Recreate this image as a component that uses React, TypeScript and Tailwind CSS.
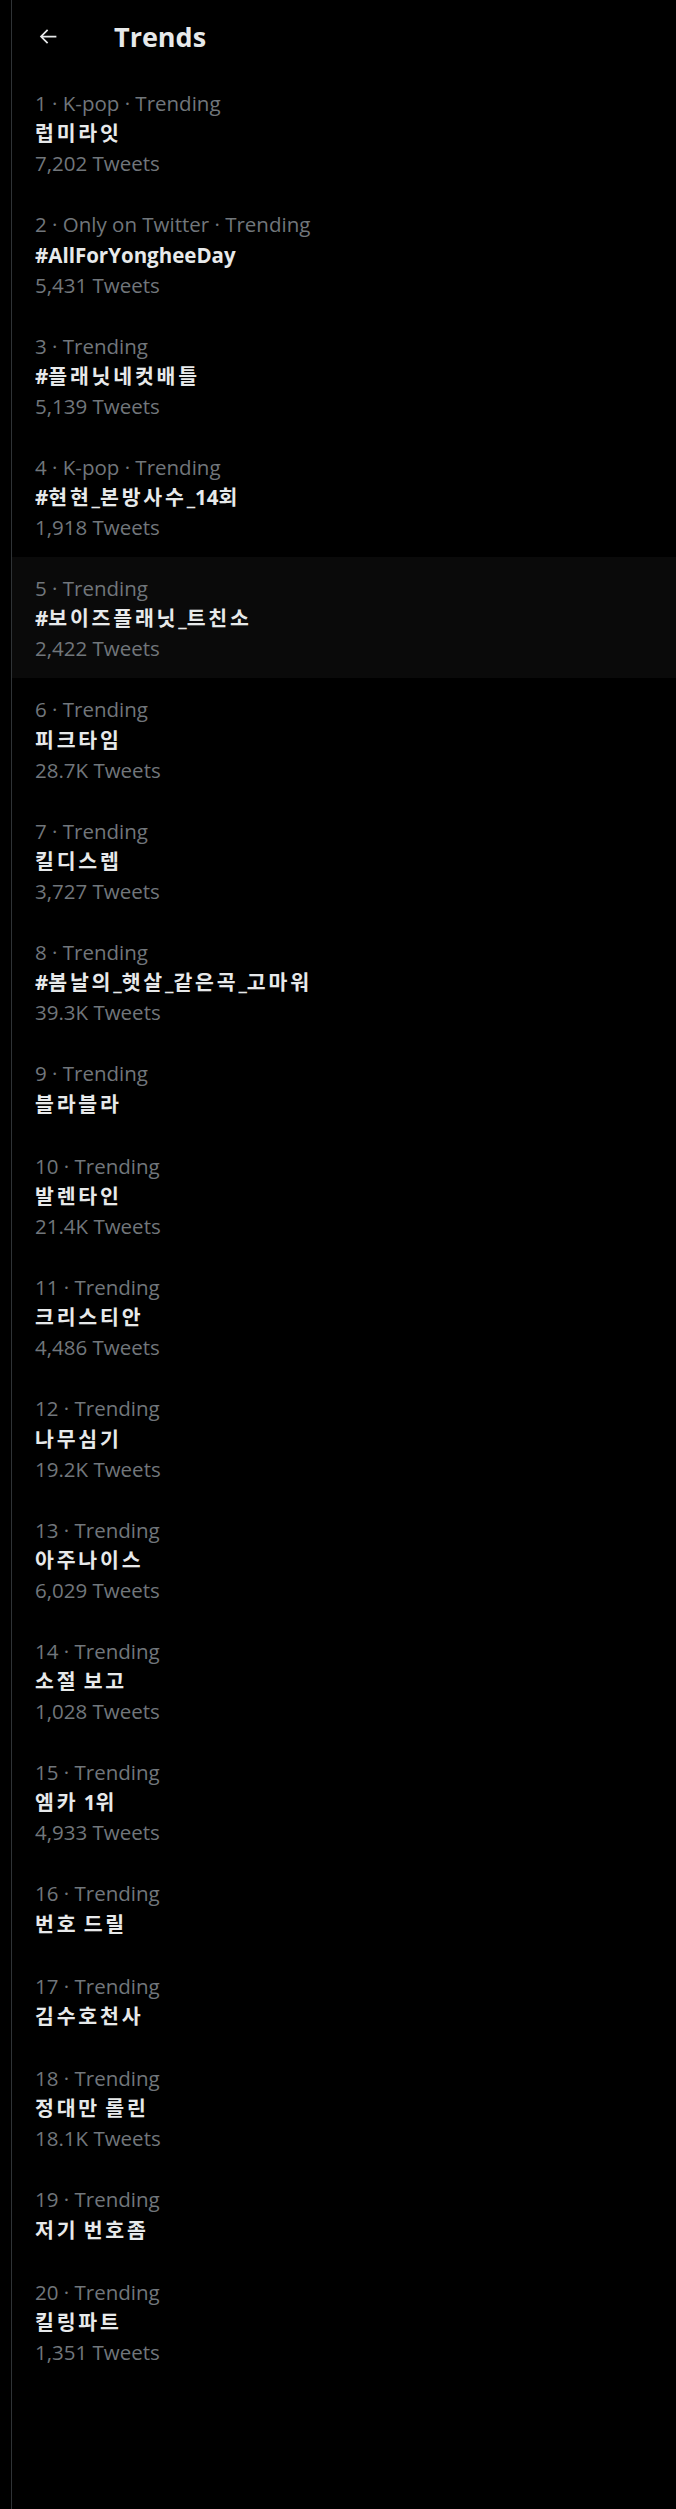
import React from "react";

type Trend = { meta: string; title: string; count?: string; active?: boolean };

const trends: Trend[] = [
  { meta: "1 · K-pop · Trending", title: "럽미라잇", count: "7,202 Tweets" },
  { meta: "2 · Only on Twitter · Trending", title: "#AllForYongheeDay", count: "5,431 Tweets" },
  { meta: "3 · Trending", title: "#플래닛네컷배틀", count: "5,139 Tweets" },
  { meta: "4 · K-pop · Trending", title: "#현현_본방사수_14회", count: "1,918 Tweets" },
  { meta: "5 · Trending", title: "#보이즈플래닛_트친소", count: "2,422 Tweets", active: true },
  { meta: "6 · Trending", title: "피크타임", count: "28.7K Tweets" },
  { meta: "7 · Trending", title: "킬디스렙", count: "3,727 Tweets" },
  { meta: "8 · Trending", title: "#봄날의_햇살_같은곡_고마워", count: "39.3K Tweets" },
  { meta: "9 · Trending", title: "블라블라" },
  { meta: "10 · Trending", title: "발렌타인", count: "21.4K Tweets" },
  { meta: "11 · Trending", title: "크리스티안", count: "4,486 Tweets" },
  { meta: "12 · Trending", title: "나무심기", count: "19.2K Tweets" },
  { meta: "13 · Trending", title: "아주나이스", count: "6,029 Tweets" },
  { meta: "14 · Trending", title: "소절 보고", count: "1,028 Tweets" },
  { meta: "15 · Trending", title: "엠카 1위", count: "4,933 Tweets" },
  { meta: "16 · Trending", title: "번호 드릴" },
  { meta: "17 · Trending", title: "김수호천사" },
  { meta: "18 · Trending", title: "정대만 롤린", count: "18.1K Tweets" },
  { meta: "19 · Trending", title: "저기 번호좀" },
  { meta: "20 · Trending", title: "킬링파트", count: "1,351 Tweets" },
];

const font = {
  fontFamily: '"Open Sans", "Noto Sans CJK KR", sans-serif',
};

function Title({ text }: { text: string }) {
  const parts = text.split(/([\uAC00-\uD7A3]+)/).filter((p) => p.length > 0);
  return (
    <>
      {parts.map((p, i) =>
        /[\uAC00-\uD7A3]/.test(p) ? (
          <span key={i} className="tracking-[2.8px]">
            {p}
          </span>
        ) : (
          <span key={i}>{p}</span>
        )
      )}
    </>
  );
}

export default function App() {
  return (
    <div className="min-h-[2509px] w-[676px] bg-black pl-[11px]" style={font}>
      <div className="min-h-[2509px] border-l border-[#2f3336]">
        <header className="flex h-[72px] items-center pl-[26px]">
          <svg width="21" height="21" viewBox="0 0 24 24" fill="none" className="text-[#e7e9ea]">
            <path d="M21 12H4M11 4.5L3.5 12L11 19.5" stroke="currentColor" strokeWidth="2" strokeLinecap="butt" strokeLinejoin="miter" />
          </svg>
          <h1 className="ml-[55px] text-[27px] font-bold leading-none text-[#e7e9ea]">Trends</h1>
        </header>
        {trends.map((t) => (
          <div
            key={t.meta}
            className={"pl-[23px] pt-[17px] pb-[15px] " + (t.active ? "bg-[#0a0a0a]" : "")}
          >
            <div className="text-[20.5px] leading-[29.3px] text-[#71767b]">{t.meta}</div>
            <div className="text-[20.5px] font-bold leading-[31px] text-[#e7e9ea]">
              <Title text={t.title} />
            </div>
            {t.count && (
              <div className="text-[20.5px] leading-[29px] text-[#71767b]">{t.count}</div>
            )}
          </div>
        ))}
      </div>
    </div>
  );
}
